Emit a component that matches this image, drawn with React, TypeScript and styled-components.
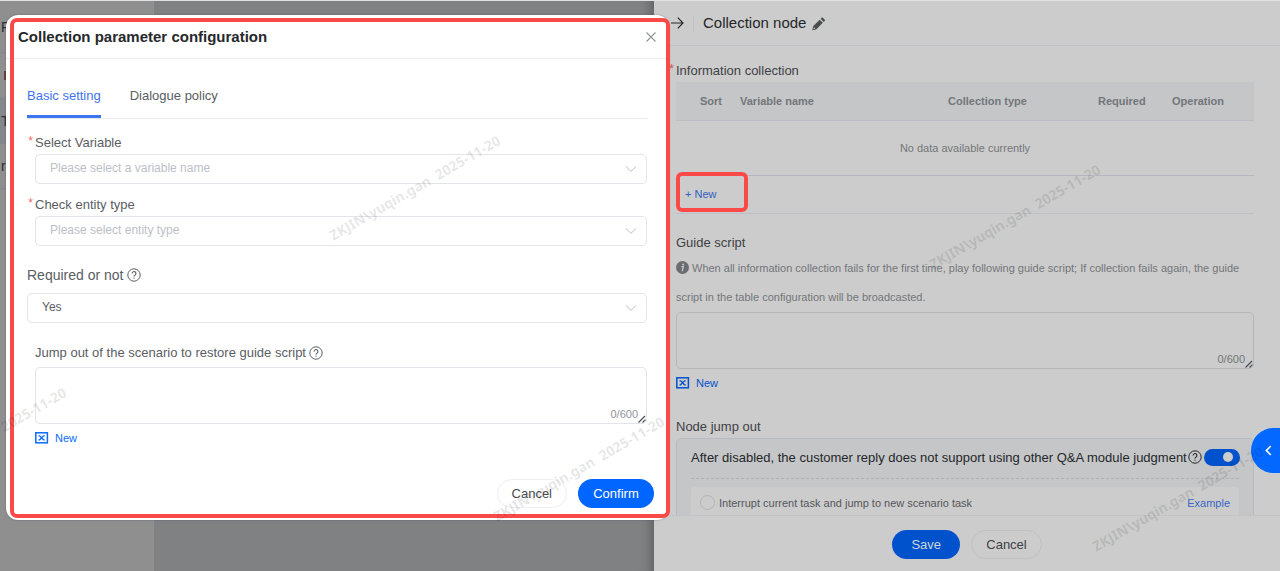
import React from "react";
import styled, { createGlobalStyle, css } from "styled-components";

const GlobalStyle = createGlobalStyle`
  *, *::before, *::after { box-sizing: border-box; }
  body { margin: 0; overflow: hidden; }
  body, button, input, select, textarea {
    font-family: "Liberation Sans", Arial, sans-serif;
    font-size: 13px;
  }
  button { padding: 0; border: 0; background: none; cursor: pointer; }
`;

const Page = styled.div`
  position: relative;
  display: grid;
  grid-template-columns: 654fr 626fr;
  height: 100vh;
  overflow: hidden;
  border-top: 1px solid #dfe2e0;
  background: #808183;
`;

/* dimmed page behind the drawer */
const Backdrop = styled.div`
  display: flex;
  box-shadow: inset -14px 0 12px -12px rgba(0, 0, 0, 0.3);
`;
const Sidebar = styled.div`
  width: 154px;
  background: #8f8f8f;
`;
const SideRow = styled.div<{ $height: number; $tint?: boolean }>`
  display: flex;
  align-items: center;
  height: ${(p) => p.$height}px;
  padding-left: 1px;
  border-bottom: 1px solid #85868a;
  background: ${(p) => (p.$tint ? "#85878e" : "transparent")};
  color: #2c2d30;
  font-size: 14px;
`;
const SideMark = styled.span`
  width: 3px;
  height: 9px;
  margin-left: 3px;
  background: #6b4038;
`;

const Drawer = styled.aside`
  display: flex;
  flex-direction: column;
  min-width: 0;
  height: 100%;
  min-height: 0;
  background: #cccccc;
`;
const DrawerHeader = styled.header`
  display: flex;
  align-items: center;
  flex: none;
  height: 45px;
  padding-left: 16px;
  border-bottom: 1px solid #c0c2c7;
  color: #262729;
`;
const IconButton = styled.button`
  display: flex;
  align-items: center;
  justify-content: center;
  color: inherit;
`;
const DrawerTitle = styled.h2`
  margin: 0 6px 0 9px;
  font-size: 15px;
  font-weight: 400;
  line-height: 20px;
`;
const HeaderRule = styled.span`
  width: 1px;
  height: 15px;
  margin-left: 9px;
  background: #bfc1c4;
`;
const DrawerBody = styled.div`
  flex: 1;
  min-height: 0;
  overflow: hidden;
  padding: 15px 26px 0 22px;
`;
const DrawerFooter = styled.footer`
  display: flex;
  flex: none;
  gap: 11px;
  justify-content: center;
  height: 56px;
  padding: 14px 0 12px;
  border-top: 1px solid #c2c4c7;
`;

const Label = styled.label<{ $dim?: boolean; $required?: boolean; $size?: number }>`
  position: relative;
  display: flex;
  align-items: center;
  gap: 3px;
  width: fit-content;
  font-size: ${(p) => p.$size ?? 13}px;
  line-height: 20px;
  color: ${(p) => (p.$dim ? "#3f4144" : "#5a5d63")};
  ${(p) =>
    p.$required &&
    css`
      &::before {
        content: "*";
        position: absolute;
        right: calc(100% + 2px);
        top: -2px;
        color: ${p.$dim ? "#c45656" : "#f56c6c"};
        font-size: 12px;
      }
    `}
`;

const DataTable = styled.table`
  width: 100%;
  margin-top: 1px;
  border-collapse: collapse;
  table-layout: fixed;
  font-size: 11px;
  color: #73767a;
  th {
    height: 38px;
    padding: 0;
    text-align: left;
    background: #c4c6c8;
    border-bottom: 1px solid #bbbdc2;
  }
  th:first-child { padding-left: 24px; }
  td {
    height: 55px;
    padding: 0;
    text-align: center;
    border-bottom: 1px solid #b5b7bd;
  }
`;
const AddRow = styled.div`
  display: flex;
  align-items: center;
  height: 38px;
  padding-left: 9px;
  border-bottom: 1px solid #bfc1c6;
`;
const AddButton = styled.button`
  position: relative;
  color: #315fc0;
  font-size: 11px;
  &::after {
    content: "";
    position: absolute;
    top: -16px;
    left: -9px;
    width: 72px;
    height: 40px;
    border: 4px solid #f94a47;
    border-radius: 6px;
  }
`;
const Section = styled.section<{ $space: number }>`
  margin-top: ${(p) => p.$space}px;
`;
const Hint = styled.p`
  margin: 1px 0 0;
  color: #73767a;
  font-size: 11px;
  line-height: 29px;
  svg { vertical-align: -2px; margin-right: 3px; }
`;

const AreaBox = styled.div`
  position: relative;
  display: flex;
`;
const Area = styled.textarea<{ $dim?: boolean }>`
  width: 100%;
  height: 57px;
  padding: 6px 12px;
  resize: none;
  outline: none;
  border: 1px solid ${(p) => (p.$dim ? "#b5b7b9" : "#e2e4ea")};
  border-radius: 5px;
  background: transparent;
`;
const Counter = styled.span<{ $dim?: boolean }>`
  position: absolute;
  right: 1px;
  bottom: 1px;
  display: flex;
  align-items: flex-end;
  color: ${(p) => (p.$dim ? "#73767a" : "#909399")};
  font-size: 11px;
  line-height: 18px;
`;

const LinkButton = styled.button<{ $dim?: boolean }>`
  display: flex;
  align-items: center;
  gap: 6px;
  height: 20px;
  margin-top: 4px;
  color: ${(p) => (p.$dim ? "#0052cc" : "#0a6bff")};
  font-size: 11px;
`;

const JumpPanel = styled.div`
  margin-top: 1px;
  padding: 9px 14px;
  border: 1px solid #b8babf;
  border-radius: 5px;
  background: #c4c6c8;
`;
const JumpHead = styled.div`
  display: flex;
  align-items: center;
  justify-content: space-between;
  gap: 2px;
  height: 31px;
  padding-bottom: 11px;
  border-bottom: 1px dashed #b0b2b5;
  color: #262729;
  white-space: nowrap;
`;
const JumpText = styled.span`
  display: flex;
  align-items: center;
  gap: 1px;
`;
const Switch = styled.input`
  appearance: none;
  display: grid;
  flex: none;
  align-items: center;
  justify-items: end;
  width: 36px;
  height: 17px;
  margin: 0;
  padding-right: 7px;
  border-radius: 9px;
  background: #0052cc;
  &::before {
    content: "";
    width: 10px;
    height: 10px;
    border-radius: 50%;
    background: #cccccc;
  }
`;
const JumpOption = styled.div`
  display: flex;
  align-items: center;
  justify-content: space-between;
  height: 32px;
  margin-top: 8px;
  padding: 0 9px;
  border-radius: 4px;
  background: #cccccc;
  font-size: 11px;
  color: #55575b;
  label { display: flex; align-items: center; gap: 4px; }
  a { color: #3a66c4; text-decoration: none; }
`;
const Radio = styled.input`
  appearance: none;
  width: 15px;
  height: 15px;
  margin: 0;
  border: 1px solid #b2b4b8;
  border-radius: 50%;
`;

const Pill = styled.button<{ $kind: "primary" | "plain"; $dim?: boolean }>`
  height: 29px;
  min-width: 68px;
  padding: 0 14px;
  border-radius: 15px;
  font-size: 13px;
  ${(p) =>
    p.$kind === "primary"
      ? css`
          min-width: ${p.$dim ? 68 : 76}px;
          background: ${p.$dim ? "#0052cc" : "#0066ff"};
          color: ${p.$dim ? "#d0d4dc" : "#ffffff"};
        `
      : css`
          border: 1px solid ${p.$dim ? "#c0c1c4" : "#eceef2"};
          color: ${p.$dim ? "#3f4144" : "#4a4c50"};
        `}
`;

const ModalLayer = styled.div`
  position: absolute;
  inset: 14px 0 auto 0;
  display: grid;
  grid-template-columns: 654fr 626fr;
  pointer-events: none;
`;
const Modal = styled.div`
  position: relative;
  margin: 0 -15px 0 6px;
  padding-bottom: 11px;
  border-radius: 12px;
  background: #ffffff;
  box-shadow: 0 0 2px rgba(60, 60, 90, 0.5);
  pointer-events: auto;
  &::after {
    content: "";
    position: absolute;
    inset: 3px -1px 2px 4px;
    border: 4px solid #f94a47;
    border-radius: 7px;
    pointer-events: none;
  }
`;
const ModalHeader = styled.header`
  display: flex;
  align-items: center;
  justify-content: space-between;
  height: 44px;
  padding: 0 12px;
  border-bottom: 1px solid #ebedf0;
  color: #909399;
`;
const ModalTitle = styled.h1`
  margin: 0;
  color: #26282b;
  font-size: 15px;
  line-height: 20px;
`;
const Tabs = styled.div`
  display: flex;
  gap: 29px;
  margin: 27px 22px 0 21px;
  border-bottom: 1px solid #e8eaf0;
`;
const Tab = styled.button<{ $active?: boolean }>`
  padding-bottom: 9px;
  border-bottom: 3px solid ${(p) => (p.$active ? "#3e74ef" : "transparent")};
  color: ${(p) => (p.$active ? "#3e74ef" : "#5a5d63")};
  font-size: 13px;
  line-height: 20px;
`;
const Form = styled.form`
  padding: 14px 22px 0 21px;
`;
const Field = styled.div<{ $indent?: boolean; $gap: number; $space: number }>`
  display: flex;
  flex-direction: column;
  gap: ${(p) => p.$gap}px;
  margin-top: ${(p) => p.$space}px;
  padding-left: ${(p) => (p.$indent ? 8 : 0)}px;
`;
const SelectBox = styled.div`
  display: grid;
  align-items: center;
  color: #bcc0c8;
  > * { grid-area: 1 / 1; }
  > svg { justify-self: end; margin-right: 10px; pointer-events: none; }
`;
const Select = styled.select<{ $empty?: boolean }>`
  appearance: none;
  width: 100%;
  height: 30px;
  padding: 0 14px 2px;
  border: 1px solid #e2e4ea;
  border-radius: 5px;
  background: #ffffff;
  color: ${(p) => (p.$empty ? "#bcc0c8" : "#5a5d63")};
  font-size: 12px;
`;
const ModalActions = styled.footer`
  display: flex;
  justify-content: flex-end;
  gap: 11px;
  margin-top: 31px;
  padding: 0 15px 1px 0;
`;

const SideTab = styled.button`
  position: absolute;
  right: 0;
  top: 427px;
  display: flex;
  align-items: center;
  justify-content: center;
  width: 29px;
  height: 45px;
  padding-left: 6px;
  border-radius: 23px 0 0 23px;
  background: #0268ff;
  color: #ffffff;
`;

const WatermarkLayer = styled.div`
  position: absolute;
  inset: 0;
  overflow: hidden;
  pointer-events: none;
`;
const Watermark = styled.span<{ $x: number; $y: number }>`
  position: absolute;
  left: ${(p) => p.$x}px;
  top: ${(p) => p.$y}px;
  transform: translate(-50%, -50%) rotate(-30deg);
  color: rgba(0, 0, 0, 0.11);
  font: 700 14px/20px "Noto Sans", sans-serif;
  white-space: pre;
`;

const Chevron = () => (
  <svg width="12" height="8" viewBox="0 0 12 8" fill="none" stroke="currentColor" aria-hidden="true">
    <path d="M1 1.5 6 6.3 11 1.5" />
  </svg>
);
const Help = () => (
  <svg width="14" height="14" viewBox="0 0 14 14" fill="none" stroke="currentColor" strokeWidth="1" aria-hidden="true">
    <circle cx="7" cy="7" r="6.2" />
    <path d="M5.1 5.5a1.9 1.9 0 1 1 2.9 1.6c-.7.45-1 .7-1 1.3" strokeWidth="1.1" />
    <circle cx="7" cy="10.1" r=".7" fill="currentColor" stroke="none" />
  </svg>
);
const Info = () => (
  <svg width="13" height="13" viewBox="0 0 13 13" aria-hidden="true">
    <circle cx="6.5" cy="6.5" r="6.5" fill="#6a6d71" />
    <circle cx="7.1" cy="3.6" r="1" fill="#ccc" />
    <path d="M5.4 5.6h1.9L6.3 9.6h.8" fill="none" stroke="#ccc" strokeWidth="1.2" />
  </svg>
);
const Variable = () => (
  <svg width="14" height="12" viewBox="0 0 14 12" fill="none" stroke="currentColor" aria-hidden="true">
    <rect x=".8" y=".8" width="11.6" height="10" strokeWidth="1.5" />
    <path d="M3.5 3.8h1.2l3.8 4h1.2M9.7 3.8H8.5l-3.8 4H3.5" strokeWidth="1.3" />
  </svg>
);
const Grip = () => (
  <svg width="8" height="8" viewBox="0 0 8 8" fill="none" stroke="#45474a" strokeWidth="1.1" aria-hidden="true">
    <path d="M.5 7.5 7 1M4.5 7.5 7.5 4.6" />
  </svg>
);

const WATERMARKS = [
  { x: 415, y: 187 },
  { x: 1015, y: 216 },
  { x: -19, y: 439 },
  { x: 579, y: 468 },
  { x: 1178, y: 498 },
];

export default function App() {
  return (
    <Page>
      <GlobalStyle />
      <Backdrop>
        <Sidebar>
          <SideRow $height={52}>F</SideRow>
          <SideRow $height={45}><SideMark /></SideRow>
          <SideRow $height={46} $tint>T</SideRow>
          <SideRow $height={45}>r</SideRow>
        </Sidebar>
      </Backdrop>

      <Drawer>
        <DrawerHeader>
          <IconButton aria-label="Collapse">
            <svg width="14" height="14" viewBox="0 0 14 14" fill="none" stroke="currentColor" strokeWidth="1.2">
              <path d="M1 7h12M7.8 1.6 13 7l-5.2 5.4" />
            </svg>
          </IconButton>
          <HeaderRule />
          <DrawerTitle>Collection node</DrawerTitle>
          <IconButton aria-label="Rename">
            <svg width="13" height="15" viewBox="0 0 13 15" fill="#4a4c50">
              <path d="M.3 14.2l.8-3.9 6.6-6.6 3.1 3.1-6.6 6.6zM8.6 2.8 9.5 1.9c.5-.5 1-.5 1.5 0l1.6 1.6c.5.5.5 1 0 1.5l-.9.9z" />
              <circle cx="2.2" cy="12.3" r=".8" fill="#cccccc" />
            </svg>
          </IconButton>
        </DrawerHeader>

        <DrawerBody>
          <Label as="div" $dim $required>Information collection</Label>
          <DataTable>
            <colgroup>
              <col width="64" />
              <col />
              <col width="150" />
              <col width="74" />
              <col width="82" />
            </colgroup>
            <thead>
              <tr>
                <th>Sort</th>
                <th>Variable name</th>
                <th>Collection type</th>
                <th>Required</th>
                <th>Operation</th>
              </tr>
            </thead>
            <tbody>
              <tr>
                <td colSpan={5}>No data available currently</td>
              </tr>
            </tbody>
          </DataTable>
          <AddRow>
            <AddButton>+ New</AddButton>
          </AddRow>

          <Section $space={19}>
            <Label $dim htmlFor="guide">Guide script</Label>
            <Hint>
              <Info />
              When all information collection fails for the first time, play following guide script; If collection
              fails again, the guide script in the table configuration will be broadcasted.
            </Hint>
            <AreaBox>
              <Area $dim id="guide" />
              <Counter $dim>0/600<Grip /></Counter>
            </AreaBox>
            <LinkButton $dim><Variable />New</LinkButton>
          </Section>

          <Section $space={24}>
            <Label as="div" $dim>Node jump out</Label>
            <JumpPanel>
              <JumpHead>
                <JumpText>
                  <label htmlFor="judge">
                    After disabled, the customer reply does not support using other Q&amp;A module judgment
                  </label>
                  <Help />
                </JumpText>
                <Switch id="judge" type="checkbox" role="switch" defaultChecked />
              </JumpHead>
              <JumpOption>
                <label>
                  <Radio type="radio" name="jump" />
                  Interrupt current task and jump to new scenario task
                </label>
                <a href="#example">Example</a>
              </JumpOption>
            </JumpPanel>
          </Section>
        </DrawerBody>

        <DrawerFooter>
          <Pill $kind="primary" $dim>Save</Pill>
          <Pill $kind="plain" $dim>Cancel</Pill>
        </DrawerFooter>
      </Drawer>

      <ModalLayer>
        <Modal role="dialog" aria-labelledby="modal-title">
          <ModalHeader>
            <ModalTitle id="modal-title">Collection parameter configuration</ModalTitle>
            <IconButton aria-label="Close">
              <svg width="12" height="12" viewBox="0 0 12 12" fill="none" stroke="currentColor" strokeWidth="1.1">
                <path d="M1.5 1.5l9 9M10.5 1.5l-9 9" />
              </svg>
            </IconButton>
          </ModalHeader>
          <Tabs role="tablist">
            <Tab role="tab" aria-selected $active>Basic setting</Tab>
            <Tab role="tab">Dialogue policy</Tab>
          </Tabs>
          <Form>
            <Field $indent $gap={1} $space={0}>
              <Label htmlFor="variable" $required>Select Variable</Label>
              <SelectBox>
                <Select id="variable" $empty>
                  <option>Please select a variable name</option>
                </Select>
                <Chevron />
              </SelectBox>
            </Field>
            <Field $indent $gap={1} $space={11}>
              <Label htmlFor="entity" $required>Check entity type</Label>
              <SelectBox>
                <Select id="entity" $empty>
                  <option>Please select entity type</option>
                </Select>
                <Chevron />
              </SelectBox>
            </Field>
            <Field $gap={8} $space={19}>
              <Label htmlFor="required" $size={14}>Required or not <Help /></Label>
              <SelectBox>
                <Select id="required">
                  <option>Yes</option>
                  <option>No</option>
                </Select>
                <Chevron />
              </SelectBox>
            </Field>
            <Field $indent $gap={4} $space={20}>
              <Label htmlFor="restore">Jump out of the scenario to restore guide script <Help /></Label>
              <AreaBox>
                <Area id="restore" />
                <Counter>0/600<Grip /></Counter>
              </AreaBox>
            </Field>
            <Field $indent $gap={0} $space={0}>
              <LinkButton type="button"><Variable />New</LinkButton>
            </Field>
          </Form>
          <ModalActions>
            <Pill $kind="plain">Cancel</Pill>
            <Pill $kind="primary">Confirm</Pill>
          </ModalActions>
        </Modal>
      </ModalLayer>

      <SideTab aria-label="Open panel">
        <svg width="7" height="11" viewBox="0 0 7 11" fill="none" stroke="currentColor" strokeWidth="1.7">
          <path d="M5.8 1 1.4 5.5 5.8 10" />
        </svg>
      </SideTab>

      <WatermarkLayer aria-hidden="true">
        {WATERMARKS.map((mark) => (
          <Watermark key={mark.x} $x={mark.x} $y={mark.y}>{"ZKJIN\\yuqin.gan  2025-11-20"}</Watermark>
        ))}
      </WatermarkLayer>
    </Page>
  );
}
